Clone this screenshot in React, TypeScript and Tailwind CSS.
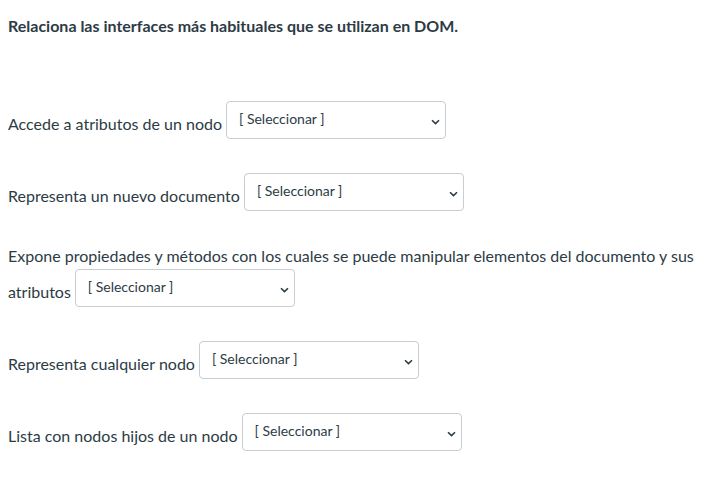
import React from "react";

function Sel() {
  return (
    <div className="relative ml-[4px] h-[38px] w-[220px] shrink-0 rounded-[4px] border border-[#c7cdd1] bg-white pl-[12px] pt-[7px] text-[14px] leading-[20px]">
      [ Seleccionar ]
      <svg
        className="absolute right-[5px] top-[17px]"
        width="9"
        height="6"
        viewBox="0 0 9 6"
        fill="none"
      >
        <path d="M1 1.2 L4.5 4.6 L8 1.2" stroke="#2d3b45" strokeWidth="1.6" />
      </svg>
    </div>
  );
}

function Row({ label }: { label: string }) {
  return (
    <div className="flex items-end">
      <span className="mb-[3px] text-[16px] leading-[24px]">{label}</span>
      <Sel />
    </div>
  );
}

export default function App() {
  return (
    <div className="bg-white px-2 pt-[14px] pb-8 font-['Lato','Noto_Sans',sans-serif] text-[#2d3b45]">
      <p className="text-[16px] font-bold leading-[24px]">
        Relaciona las interfaces más habituales que se utilizan en DOM.
      </p>
      <div className="mt-[63px] flex flex-col gap-[34px]">
        <Row label="Accede a atributos de un nodo" />
        <Row label="Representa un nuevo documento" />
        <div className="-mt-[1px] flex flex-col">
          <p className="text-[16px] leading-[24px]">
            Expone propiedades y métodos con los cuales se puede manipular elementos del documento y sus
          </p>
          <div className="mt-[1px] flex items-end">
            <span className="mb-[3px] text-[16px] leading-[24px]">atributos</span>
            <Sel />
          </div>
        </div>
        <Row label="Representa cualquier nodo" />
        <Row label="Lista con nodos hijos de un nodo" />
      </div>
    </div>
  );
}
